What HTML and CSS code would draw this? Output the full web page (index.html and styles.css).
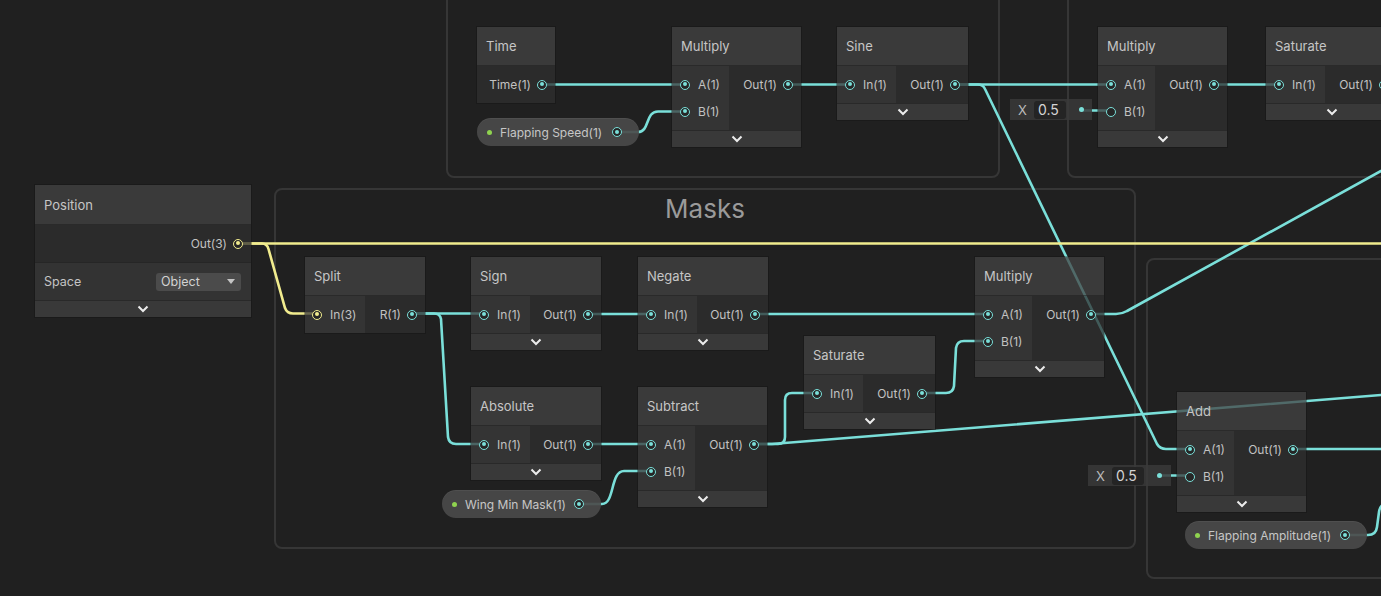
FILE: index.html
```html
<!DOCTYPE html>
<html lang="en">
<head>
  <meta charset="UTF-8">
  <meta name="viewport" content="width=device-width, initial-scale=1.0">
  <title>Shader Graph - Wing Flap</title>
  <link rel="stylesheet" href="styles.css">
</head>
<body>
  <div class="graph">
    <!-- groups -->
    <div class="group g-top-left"></div>
    <div class="group g-top-right"></div>
    <div class="group g-masks"><div class="group-title">Masks</div></div>
    <div class="group g-bottom-right"></div>

    <!-- edges -->
    <svg class="edges" width="1381" height="596" viewBox="0 0 1381 596">
      <g class="cyan">
        <path d="M541 84.5 H685"/>
        <path d="M617 132 H638 C650 132 645 111.5 658 111.5 H685"/>
        <path d="M788 84.5 H850"/>
        <path d="M955 84.5 H1111"/>
        <path d="M955 84.5 H978 Q983 84.5 985 89 L1157 444 Q1160 449 1166 449 H1190"/>
        <path d="M1081 110.5 H1111"/>
        <path d="M1214 84.5 H1278"/>
        <path d="M412 313.5 H484"/>
        <path d="M412 313.5 H434 Q440 313.5 441 319 L448 437 Q449 444 456 444 H484"/>
        <path d="M588 314 H651"/>
        <path d="M755 314 H988"/>
        <path d="M1091 314 H1116 Q1122 314 1127 311 L1381 171"/>
        <path d="M588 444 H651"/>
        <path d="M579 504 H602 C615 504 610 471 624 471 H651"/>
        <path d="M754 444 H778 Q785 444 785 437 V400 Q785 393 792 393 H817"/>
        <path d="M754 444 H772 L1381 395"/>
        <path d="M922 393 H946 Q953 393 954 386 L956 348 Q957 341 964 341 H988"/>
        <path d="M1160 475.5 H1190"/>
        <path d="M1293 449 H1381"/>
        <path d="M1346 535 H1368 Q1376 535 1377 527 L1379 512 Q1380 505 1386 503"/>
      </g>
      <g class="yellow">
        <path d="M238 243.5 H1381"/>
        <path d="M238 243.5 H262 Q267 243.5 268.5 249 L285 308 Q287 313.5 293 313.5 H317"/>
      </g>
    </svg>

    <!-- nodes -->
    <div class="node n-time">
      <div class="title">Time</div>
      <div class="ports">
        <div class="outputs"><div class="port">Time(1)<span class="dot"></span></div></div>
      </div>
    </div>

    <div class="node n-mul1">
      <div class="title">Multiply</div>
      <div class="ports">
        <div class="inputs">
          <div class="port"><span class="dot"></span>A(1)</div>
          <div class="port"><span class="dot"></span>B(1)</div>
        </div>
        <div class="outputs"><div class="port">Out(1)<span class="dot"></span></div></div>
      </div>
      <div class="footer"><svg width="12" height="8" viewBox="0 0 12 8"><path d="M1.5 1.5 L6 6 L10.5 1.5"/></svg></div>
    </div>

    <div class="pill p-speed"><span class="prop-dot"></span><span class="pill-label">Flapping Speed(1)</span><span class="dot"></span></div>

    <div class="node n-sine">
      <div class="title">Sine</div>
      <div class="ports">
        <div class="inputs"><div class="port"><span class="dot"></span>In(1)</div></div>
        <div class="outputs"><div class="port">Out(1)<span class="dot"></span></div></div>
      </div>
      <div class="footer"><svg width="12" height="8" viewBox="0 0 12 8"><path d="M1.5 1.5 L6 6 L10.5 1.5"/></svg></div>
    </div>

    <div class="inline-value v-mul2"><span class="axis">X</span><span class="field">0.5</span><span class="small-dot"></span></div>

    <div class="node n-mul2">
      <div class="title">Multiply</div>
      <div class="ports">
        <div class="inputs">
          <div class="port"><span class="dot"></span>A(1)</div>
          <div class="port"><span class="dot hollow"></span>B(1)</div>
        </div>
        <div class="outputs"><div class="port">Out(1)<span class="dot"></span></div></div>
      </div>
      <div class="footer"><svg width="12" height="8" viewBox="0 0 12 8"><path d="M1.5 1.5 L6 6 L10.5 1.5"/></svg></div>
    </div>

    <div class="node n-sat1">
      <div class="title">Saturate</div>
      <div class="ports">
        <div class="inputs"><div class="port"><span class="dot"></span>In(1)</div></div>
        <div class="outputs"><div class="port">Out(1)<span class="dot"></span></div></div>
      </div>
      <div class="footer"><svg width="12" height="8" viewBox="0 0 12 8"><path d="M1.5 1.5 L6 6 L10.5 1.5"/></svg></div>
    </div>

    <div class="node n-position">
      <div class="title tall">Position</div>
      <div class="ports">
        <div class="outputs out-row"><div class="port">Out(3)<span class="dot yellow"></span></div></div>
      </div>
      <div class="setting">
        <span>Space</span>
        <div class="dropdown">Object<span class="arrow"></span></div>
      </div>
      <div class="footer"><svg width="12" height="8" viewBox="0 0 12 8"><path d="M1.5 1.5 L6 6 L10.5 1.5"/></svg></div>
    </div>

    <div class="node n-split">
      <div class="title">Split</div>
      <div class="ports">
        <div class="inputs"><div class="port"><span class="dot yellow"></span>In(3)</div></div>
        <div class="outputs"><div class="port">R(1)<span class="dot"></span></div></div>
      </div>
    </div>

    <div class="node n-sign">
      <div class="title">Sign</div>
      <div class="ports">
        <div class="inputs"><div class="port"><span class="dot"></span>In(1)</div></div>
        <div class="outputs"><div class="port">Out(1)<span class="dot"></span></div></div>
      </div>
      <div class="footer"><svg width="12" height="8" viewBox="0 0 12 8"><path d="M1.5 1.5 L6 6 L10.5 1.5"/></svg></div>
    </div>

    <div class="node n-negate">
      <div class="title">Negate</div>
      <div class="ports">
        <div class="inputs"><div class="port"><span class="dot"></span>In(1)</div></div>
        <div class="outputs"><div class="port">Out(1)<span class="dot"></span></div></div>
      </div>
      <div class="footer"><svg width="12" height="8" viewBox="0 0 12 8"><path d="M1.5 1.5 L6 6 L10.5 1.5"/></svg></div>
    </div>

    <div class="node n-mul3">
      <div class="title">Multiply</div>
      <div class="ports">
        <div class="inputs">
          <div class="port"><span class="dot"></span>A(1)</div>
          <div class="port"><span class="dot"></span>B(1)</div>
        </div>
        <div class="outputs"><div class="port">Out(1)<span class="dot"></span></div></div>
      </div>
      <div class="footer"><svg width="12" height="8" viewBox="0 0 12 8"><path d="M1.5 1.5 L6 6 L10.5 1.5"/></svg></div>
    </div>

    <div class="node n-sat2">
      <div class="title">Saturate</div>
      <div class="ports">
        <div class="inputs"><div class="port"><span class="dot"></span>In(1)</div></div>
        <div class="outputs"><div class="port">Out(1)<span class="dot"></span></div></div>
      </div>
      <div class="footer"><svg width="12" height="8" viewBox="0 0 12 8"><path d="M1.5 1.5 L6 6 L10.5 1.5"/></svg></div>
    </div>

    <div class="node n-absolute">
      <div class="title">Absolute</div>
      <div class="ports">
        <div class="inputs"><div class="port"><span class="dot"></span>In(1)</div></div>
        <div class="outputs"><div class="port">Out(1)<span class="dot"></span></div></div>
      </div>
      <div class="footer"><svg width="12" height="8" viewBox="0 0 12 8"><path d="M1.5 1.5 L6 6 L10.5 1.5"/></svg></div>
    </div>

    <div class="node n-subtract">
      <div class="title">Subtract</div>
      <div class="ports">
        <div class="inputs">
          <div class="port"><span class="dot"></span>A(1)</div>
          <div class="port"><span class="dot"></span>B(1)</div>
        </div>
        <div class="outputs"><div class="port">Out(1)<span class="dot"></span></div></div>
      </div>
      <div class="footer"><svg width="12" height="8" viewBox="0 0 12 8"><path d="M1.5 1.5 L6 6 L10.5 1.5"/></svg></div>
    </div>

    <div class="pill p-wing"><span class="prop-dot"></span><span class="pill-label">Wing Min Mask(1)</span><span class="dot"></span></div>

    <div class="inline-value v-add"><span class="axis">X</span><span class="field">0.5</span><span class="small-dot"></span></div>

    <div class="node n-add">
      <div class="title">Add</div>
      <div class="ports">
        <div class="inputs">
          <div class="port"><span class="dot"></span>A(1)</div>
          <div class="port"><span class="dot hollow"></span>B(1)</div>
        </div>
        <div class="outputs"><div class="port">Out(1)<span class="dot"></span></div></div>
      </div>
      <div class="footer"><svg width="12" height="8" viewBox="0 0 12 8"><path d="M1.5 1.5 L6 6 L10.5 1.5"/></svg></div>
    </div>

    <div class="pill p-amp"><span class="prop-dot"></span><span class="pill-label">Flapping Amplitude(1)</span><span class="dot"></span></div>
  </div>
</body>
</html>
```

FILE: styles.css
```css
body {
  margin: 0;
  background-color: #202020;
  font-family: Inter, "Noto Sans", sans-serif;
  color: #c4c4c4;
  overflow: hidden;
}
.graph {
  position: relative;
  width: 1381px;
  height: 596px;
  overflow: hidden;
  background-color: #202020;
}

/* groups */
.group {
  position: absolute;
  box-sizing: border-box;
  border: 2px solid #363636;
  border-radius: 8px;
}
.g-top-left { left: 446px; top: -30px; width: 554px; height: 208px; }
.g-top-right { left: 1067px; top: -30px; width: 400px; height: 208px; }
.g-masks { left: 274px; top: 188px; width: 862px; height: 361px; }
.g-bottom-right { left: 1146px; top: 258px; width: 300px; height: 321px; }
.group-title {
  text-align: center;
  font-size: 26px;
  line-height: 30px;
  padding-top: 4px;
  color: #9a9a9a;
}

/* edges */
.edges {
  position: absolute;
  left: 0;
  top: 0;
}
.edges path {
  fill: none;
  stroke-width: 2.6;
  stroke-linecap: round;
}
.edges .cyan path { stroke: #7adfd9; }
.edges .yellow path { stroke: #f1ec8e; }

/* nodes */
.node {
  position: absolute;
  font-size: 12px;
  box-shadow: 0 0 0 1px rgba(16, 16, 16, 0.35);
}
.n-time { left: 477px; top: 27px; width: 78px; }
.n-mul1 { left: 672px; top: 27px; width: 129px; }
.n-sine { left: 837px; top: 27px; width: 131px; }
.n-mul2 { left: 1098px; top: 27px; width: 129px; }
.n-sat1 { left: 1266px; top: 27px; width: 131px; }
.n-position { left: 35px; top: 185px; width: 216px; }
.n-split { left: 305px; top: 257px; width: 120px; }
.n-sign { left: 471px; top: 257px; width: 130px; }
.n-negate { left: 638px; top: 257px; width: 130px; }
.n-mul3 { left: 975px; top: 257px; width: 129px; }
.n-sat2 { left: 804px; top: 336px; width: 131px; }
.n-absolute { left: 471px; top: 387px; width: 130px; }
.n-subtract { left: 638px; top: 387px; width: 129px; }
.n-add { left: 1177px; top: 392px; width: 129px; }

.title {
  height: 39px;
  line-height: 39px;
  padding-left: 9px;
  font-size: 13px;
  color: #c6c6c6;
  background: rgba(67, 67, 67, 0.75);
  border-bottom: 1px solid rgba(26, 26, 26, 0.5);
  box-sizing: border-box;
}
.title.tall {
  height: 40px;
  line-height: 40px;
}
.ports {
  display: flex;
}
.inputs {
  padding: 5px 9px 5px 0;
  background: rgba(59, 59, 59, 0.75);
}
.outputs {
  flex: 1;
  padding: 5px 0 5px 10px;
  background: rgba(47, 47, 47, 0.75);
  display: flex;
  flex-direction: column;
  align-items: flex-end;
}
.port {
  height: 27px;
  display: flex;
  align-items: center;
  color: #c2c2c2;
}
.inputs .port {
  padding-left: 8px;
  gap: 8px;
}
.outputs .port {
  padding-right: 8px;
  gap: 6px;
}
.n-split .inputs .port { padding-left: 7px; }
.n-position .out-row {
  padding: 5px 0 5px 0;
  height: 37px;
  box-sizing: border-box;
}
.n-position .out-row .port { height: 27px; }

.dot {
  position: relative;
  flex: none;
  width: 10px;
  height: 10px;
  box-sizing: border-box;
  border: 1.5px solid #7adfd9;
  border-radius: 50%;
  background: #262626;
}
.dot::after {
  content: "";
  position: absolute;
  left: 1.5px;
  top: 1.5px;
  width: 4px;
  height: 4px;
  border-radius: 50%;
  background: #7adfd9;
}
.dot.yellow { border-color: #f1ec8e; }
.dot.yellow::after { background: #f1ec8e; }
.dot.hollow::after { display: none; }

.footer {
  height: 17px;
  display: flex;
  align-items: center;
  justify-content: center;
  background: rgba(65, 65, 65, 0.75);
  border-top: 1px solid rgba(26, 26, 26, 0.5);
  box-sizing: border-box;
}
.footer svg path {
  fill: none;
  stroke: #ececec;
  stroke-width: 2;
}

/* position node settings row */
.setting {
  height: 38px;
  display: flex;
  align-items: center;
  justify-content: space-between;
  padding: 0 10px 0 9px;
  font-size: 12.5px;
  color: #c4c4c4;
  background: rgba(57, 57, 57, 0.75);
  border-top: 1px solid rgba(26, 26, 26, 0.5);
  box-sizing: border-box;
}
.dropdown {
  width: 85px;
  height: 18px;
  box-sizing: border-box;
  padding: 0 6px 0 5px;
  display: flex;
  align-items: center;
  justify-content: space-between;
  background: #4b4b4b;
  border-radius: 3px;
  color: #d2d2d2;
  font-size: 12.5px;
}
.arrow {
  width: 0;
  height: 0;
  border-left: 4.5px solid transparent;
  border-right: 4.5px solid transparent;
  border-top: 5px solid #c4c4c4;
}

/* property pills */
.pill {
  position: absolute;
  height: 28px;
  box-sizing: border-box;
  padding: 0 17px 0 10px;
  display: flex;
  align-items: center;
  border-radius: 14px;
  background: rgba(74, 74, 74, 0.92);
  box-shadow: inset 0 1px 0 rgba(255, 255, 255, 0.05);
  font-size: 12px;
  color: #c6c6c6;
}
.p-speed { left: 477px; top: 118px; width: 162px; }
.p-wing { left: 442px; top: 490px; width: 159px; }
.p-amp { left: 1185px; top: 521px; width: 182px; }
.prop-dot {
  width: 5px;
  height: 5px;
  border-radius: 50%;
  background: #8fd34f;
  margin-right: 8px;
}
.pill-label {
  flex: 1;
}

/* inline default value */
.inline-value {
  position: absolute;
  height: 21px;
  display: flex;
  align-items: center;
  box-sizing: border-box;
  padding-left: 8px;
  background: rgba(58, 58, 58, 0.85);
  color: #bcbcbc;
  font-size: 13px;
}
.v-mul2 { left: 1010px; top: 99px; width: 82px; }
.v-add { left: 1088px; top: 465px; width: 83px; }
.axis {
  width: 16px;
}
.field {
  width: 32px;
  height: 18px;
  line-height: 18px;
  box-sizing: border-box;
  padding-left: 4px;
  background: #242424;
  border-radius: 3px;
  color: #d4d4d4;
  font-size: 14px;
}
.small-dot {
  width: 5px;
  height: 5px;
  border-radius: 50%;
  background: #7adfd9;
  margin-left: 13px;
}
```
